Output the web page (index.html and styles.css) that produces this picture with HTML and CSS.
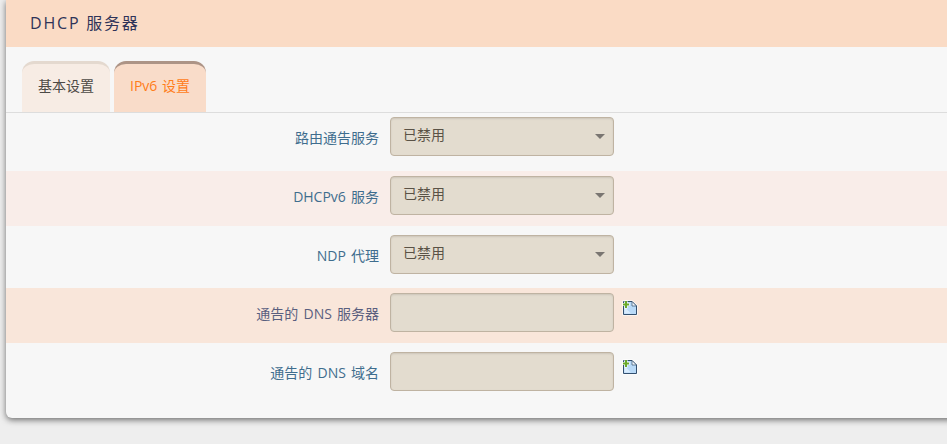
FILE: index.html
```html
<!DOCTYPE html>
<html>
    <head>
        <meta charset="utf-8">
        <meta name="viewport" content="width=device-width, initial-scale=1">
        <link rel="stylesheet" href="styles.css">
        <title>DHCP 服务器</title>
    </head>
    <body>
        <div class="panel">
            <h3 class="panel-title">DHCP 服务器</h3>
            <ul class="tabs">
                <li class="tab">基本设置</li>
                <li class="tab active">IPv6 设置</li>
            </ul>
            <div class="section">
                <div class="row row-a">
                    <label class="row-label">路由通告服务</label>
                    <div class="select">已禁用<span class="caret"></span></div>
                </div>
                <div class="row row-b">
                    <label class="row-label">DHCPv6 服务</label>
                    <div class="select">已禁用<span class="caret"></span></div>
                </div>
                <div class="row row-c">
                    <label class="row-label">NDP 代理</label>
                    <div class="select">已禁用<span class="caret"></span></div>
                </div>
                <div class="row row-d">
                    <label class="row-label">通告的 DNS 服务器</label>
                    <div class="text-input"></div>
                    <svg class="add-icon" width="16" height="16" viewBox="0 0 16 16">
                        <path d="M0.500 0.500H10.500L15.500 5.500V15.500H0.500Z" fill="#fff"/>
                        <path d="M1.500 1.500H10L14.500 6V14.500H1.500Z" fill="#b9daf8" stroke="#33506f"/>
                        <path d="M10 1.500V6H14.500Z" fill="#f2f8fe" stroke="#33506f" stroke-width=".7"/>
                        <path d="M2.500 13.500V7L9 13.500Z" fill="#d9ecfd"/>
                        <path d="M0.500 3H2.500V0.500H5.500V3H7.500V6H5.500V8.500H2.500V6H0.500Z" fill="#fff"/>
                        <path d="M1 3.500H3V1H5V3.500H7V5.500H5V8H3V5.500H1Z" fill="#6aa92c"/>
                    </svg>
                </div>
                <div class="row row-e">
                    <label class="row-label">通告的 DNS 域名</label>
                    <div class="text-input"></div>
                    <svg class="add-icon" width="16" height="16" viewBox="0 0 16 16">
                        <path d="M0.500 0.500H10.500L15.500 5.500V15.500H0.500Z" fill="#fff"/>
                        <path d="M1.500 1.500H10L14.500 6V14.500H1.500Z" fill="#b9daf8" stroke="#33506f"/>
                        <path d="M10 1.500V6H14.500Z" fill="#f2f8fe" stroke="#33506f" stroke-width=".7"/>
                        <path d="M2.500 13.500V7L9 13.500Z" fill="#d9ecfd"/>
                        <path d="M0.500 3H2.500V0.500H5.500V3H7.500V6H5.500V8.500H2.500V6H0.500Z" fill="#fff"/>
                        <path d="M1 3.500H3V1H5V3.500H7V5.500H5V8H3V5.500H1Z" fill="#6aa92c"/>
                    </svg>
                </div>
            </div>
        </div>
    </body>
</html>
```

FILE: styles.css
```css
body {
    font: 14px/18px "Open Sans", "Noto Sans CJK SC", sans-serif;
    margin: 0;
    padding: 0;
    height: 444px;
    overflow: hidden;
    color: #404040;
    background-color: #eee;
}

.panel {
    width: 960px;
    height: 418px;
    margin-left: 6px;
    background-color: #f7f7f7;
    border-radius: 0 0 6px 6px;
    box-shadow: 0 2px 6px rgba(0, 0, 0, 0.55);
}

.panel-title {
    margin: 0;
    height: 47px;
    padding-left: 24px;
    font-size: 16px;
    font-weight: normal;
    line-height: 46px;
    letter-spacing: 1.8px;
    color: #2f3358;
    background-color: #fadbc5;
}

.tabs {
    display: flex;
    gap: 4px;
    height: 51px;
    margin: 14px 0 0;
    padding: 0 0 0 16px;
    list-style: none;
    border-bottom: 1px solid #ddd;
    word-spacing: 1px;
}

.tab {
    height: 48px;
    padding: 0 16px;
    line-height: 44px;
    color: #4d4a46;
    background-color: #f7ece4;
    border-top: 3px solid #e4d9cf;
    border-radius: 12px 12px 0 0;
}

.tab.active {
    color: #ff7d1a;
    background-color: #f9dcc9;
    border-top-color: #ad9486;
}

.row {
    display: flex;
    align-items: flex-start;
    word-spacing: 1.5px;
}

.row-a {
    height: 58px;
    padding-top: 4px;
    box-sizing: border-box;
}

.row-b {
    height: 55px;
    padding-top: 5px;
    box-sizing: border-box;
    background-color: #f9ede9;
}

.row-c {
    height: 62px;
    padding-top: 9px;
    box-sizing: border-box;
}

.row-d {
    height: 55px;
    padding-top: 5px;
    box-sizing: border-box;
    background-color: #f9e6da;
}

.row-e {
    height: 55px;
    padding-top: 9px;
    box-sizing: border-box;
}

.row-label {
    width: 373px;
    margin-right: 11px;
    padding-top: 12px;
    text-align: right;
    color: #3f6d8e;
}

.row-d .row-label {
    color: #5a5f7f;
}

.select,
.text-input {
    position: relative;
    box-sizing: border-box;
    width: 224px;
    height: 39px;
    padding: 0 12px;
    line-height: 34px;
    color: #5a5246;
    background-color: #e3dccf;
    border: 1px solid #bfb3a2;
    border-radius: 4px;
    box-shadow: inset 0 1px 2px rgba(0, 0, 0, 0.1);
}

.caret {
    position: absolute;
    right: 8px;
    top: 16px;
    border-top: 5px solid #7a7672;
    border-left: 5px solid transparent;
    border-right: 5px solid transparent;
}

.add-icon {
    margin: 7px 0 0 8px;
}
```
